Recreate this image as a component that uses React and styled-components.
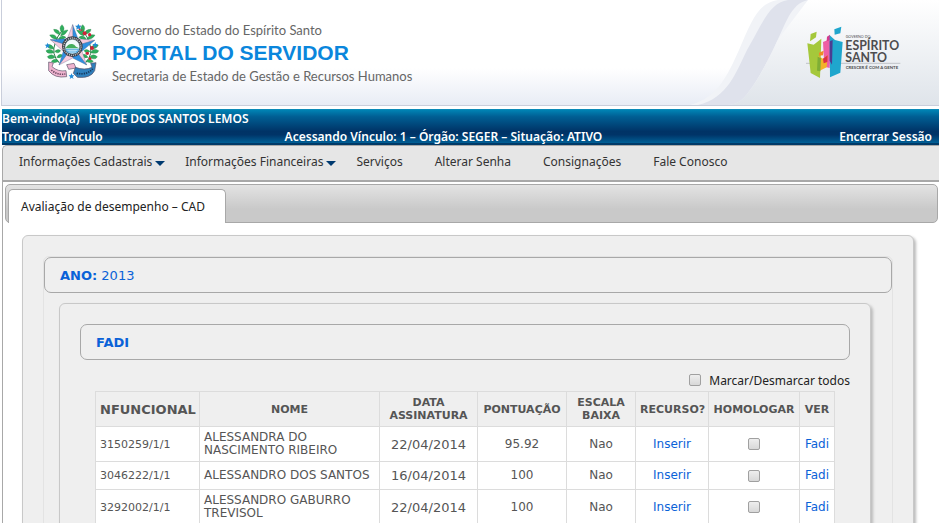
import { useState } from "react";
import styled, { createGlobalStyle } from "styled-components"

const rows = [
  { id: "3150259/1/1", nome: "ALESSANDRA DO NASCIMENTO RIBEIRO", data: "22/04/2014", pontos: "95.92", escala: "Nao" },
  { id: "3046222/1/1", nome: "ALESSANDRO DOS SANTOS", data: "16/04/2014", pontos: "100", escala: "Nao" },
  { id: "3292002/1/1", nome: "ALESSANDRO GABURRO TREVISOL", data: "22/04/2014", pontos: "100", escala: "Nao" },
]

const menu = [
  { label: "Informações Cadastrais", sub: true },
  { label: "Informações Financeiras", sub: true },
  { label: "Serviços" },
  { label: "Alterar Senha" },
  { label: "Consignações" },
  { label: "Fale Conosco" },
]

const Leaves = () => (
  <g>
    <path d="M70 135 Q44 108 58 74 Q62 58 78 38" fill="none" stroke="#2c7a45" strokeWidth="3" />
    <g fill="#2fae5c" stroke="#1d7a40" strokeWidth="1">
      <path d="M78 44 Q66 30 78 20 Q90 32 78 44" />
      <path d="M72 50 Q54 46 53 34 Q72 34 72 50" />
      <path d="M74 54 Q88 52 96 36 Q76 36 74 54" />
      <path d="M64 64 Q48 64 41 51 Q60 46 64 64" />
      <path d="M66 64 Q76 70 90 58 Q76 48 66 64" />
      <path d="M54 93 Q36 94 31 81 Q48 76 54 93" />
      <path d="M54 104 Q34 110 30 98 Q46 88 54 104" />
      <path d="M56 100 Q66 90 74 98 Q66 110 56 100" />
      <path d="M58 118 Q40 128 34 116 Q48 104 58 118" />
      <path d="M62 118 Q70 104 80 112 Q74 124 62 118" />
      <path d="M68 130 Q52 138 46 130 Q58 118 68 130" />
    </g>
  </g>
)

const Brasao = () => (
  <svg width="70" height="70" viewBox="0 0 210 210" aria-hidden="true">
    <Leaves />
    <g transform="translate(218 0) scale(-1 1)">
      <Leaves />
    </g>
    <g fill="#cf2238">
      <path d="M134 22 a8 8 0 1 0 8 12 a6 6 0 0 1 -8 -12" />
      <circle cx="146" cy="46" r="6" />
      <circle cx="161" cy="50" r="5" />
      <circle cx="168" cy="90" r="6" />
      <circle cx="154" cy="106" r="5" />
      <circle cx="162" cy="122" r="4" />
    </g>
    <g strokeWidth="1" stroke="#4c5a80">
      <path d="M110 20 L126 62 L110 86 Z" fill="#2f8fe0" />
      <path d="M110 20 L94 62 L110 86 Z" fill="#f7cbdd" />
      <path d="M176 67 L126 62 L110 86 Z" fill="#f7cbdd" />
      <path d="M176 67 L138 100 L110 86 Z" fill="#2f8fe0" />
      <path d="M152 141 L138 100 L110 86 Z" fill="#f7cbdd" />
      <path d="M152 141 L110 120 L110 86 Z" fill="#2f8fe0" />
      <path d="M69 141 L110 120 L110 86 Z" fill="#f7cbdd" />
      <path d="M69 141 L82 100 L110 86 Z" fill="#2f8fe0" />
      <path d="M43 65 L82 100 L110 86 Z" fill="#f7cbdd" />
      <path d="M43 65 L94 62 L110 86 Z" fill="#2f8fe0" />
    </g>
    <circle cx="109" cy="86" r="31" fill="#3c3d45" />
    <circle cx="109" cy="86" r="26" fill="none" stroke="#d5d7db" strokeWidth="4" strokeDasharray="3 3" />
    <circle cx="109" cy="86" r="22" fill="#f2fafc" stroke="#24555a" strokeWidth="1" />
    <path d="M88 91 Q96 78 106 78 Q114 76 120 86 L130 91 Z" fill="#45ad5e" />
    <path d="M88 92 H130 Q128 102 120 106 H98 Q90 102 88 92" fill="#5eb2e4" />
    <path d="M94 97 H124 M98 102 H120" stroke="#fff" strokeWidth="2" />
    <g stroke="#575067" strokeWidth="2">
      <path d="M38 132 L52 135 L48 146 Q66 162 90 158 L92 176 Q56 182 38 158 Z" fill="#efb4cf" />
      <path d="M92 140 L114 136 L120 150 L98 154 Z" fill="#efb4cf" />
      <path d="M180 134 L164 136 L168 148 Q146 158 118 148 L112 166 L124 178 Q164 182 176 158 Z" fill="#2f80bd" />
    </g>
    <path d="M46 156 Q64 172 88 168" fill="none" stroke="#6c4763" strokeWidth="5" strokeDasharray="4 3" />
    <path d="M122 166 Q154 172 170 152" fill="none" stroke="#16395e" strokeWidth="5" strokeDasharray="4 3" />
    <g fill="#1f8ad8">
      <path d="M127 17 l3 6 7 0 -5 5 2 7 -7 -4 -6 4 1 -7 -5 -5 7 0z" />
      <path d="M35 74 l2 6 6 0 -5 5 3 6 -6 -4 -6 4 2 -6 -5 -5 6 0z" />
      <path d="M178 72 l2 6 6 0 -5 5 3 6 -6 -4 -6 4 2 -6 -5 -5 6 0z" />
      <path d="M107 166 l2 6 6 0 -5 5 3 6 -6 -4 -6 4 2 -6 -5 -5 6 0z" />
    </g>
  </svg>
)

const LogoES = () => (
  <svg width="115" height="70" viewBox="0 0 345 210" role="img" aria-label="Governo do Espírito Santo">
    <path d="M33 136 H316" stroke="#a9adb3" strokeWidth="2" />
    <path d="M84 72 L108 62 L104 150 L88 146 Z" fill="#ee5fa4" />
    <path d="M96 56 L105 50 L106 66 L95 70 Z" fill="#d9398c" />
    <path d="M37 76 L56 80 L79 62 L75 180 L47 165 Z" fill="#a5c83b" />
    <path d="M47 48 L65 41 L63 58 L45 70 Z" fill="#a5c83b" />
    <path d="M104 52 L120 66 L143 72 L136 164 L105 178 Z" fill="#1fa6cd" />
    <path d="M118 34 L139 26 L136 46 L119 50 Z" fill="#1fa6cd" />
    <path d="M104 70 L113 66 L111 140 L104 128 Z" fill="#4b3d92" />
    <path d="M70 114 L84 122 L98 112 L95 148 L74 158 Z" fill="#f3b229" />
    <path d="M72 104 L86 98 L84 112 L72 113 Z" fill="#f08a24" />
    <path d="M84 122 L98 112 L97 132 L86 136 Z" fill="#dd2f45" />
    <path d="M68 116 L78 120 L76 160 L66 158 Z" fill="#7fae35" />
    <g fill="#4d4d4f" fontFamily="Lato, sans-serif">
      <text x="152" y="61" fontSize="11">GOVERNO DO</text>
      <text x="151" y="97" fontSize="37" fontWeight="700">ESPÍRITO</text>
      <text x="151" y="131" fontSize="37" fontWeight="700">SANTO</text>
      <text x="152" y="154" fontSize="13" fontWeight="700">CRESCER É COM A GENTE</text>
    </g>
  </svg>
)

const Onda = () => (
  <Wave viewBox="0 0 299 105" aria-hidden="true">
    <defs>
      <linearGradient id="fundo" x1="0" y1="0" x2="0" y2="1">
        <stop offset="0" stopColor="#ffffff" />
        <stop offset="1" stopColor="#dfe4ea" />
      </linearGradient>
    </defs>
    <path d="M299 0 H168 C150 4 146 24 133 50 C122 72 116 82 110 90 C103 100 98 104 88 105 H299 Z" fill="url(#fundo)" />
    <path d="M138 0 C118 3 112 20 99 50 C88 74 78 98 50 105 H88 L168 0 Z" fill="#f1f3f7" />
    <path d="M148 0 C130 3 124 20 107 50 C96 72 88 98 58 105 H88 C98 104 103 100 110 90 C116 82 122 72 133 50 C146 24 150 4 168 0 Z" fill="#dfe2ec" />
  </Wave>
)

const App = () => {
  const [marked, setMarked] = useState([])

  const toggle = (id) => {
    setMarked(marked.includes(id) ? marked.filter(m => m !== id) : [...marked, id])
  }

  const toggleAll = () => {
    setMarked(marked.length === rows.length ? [] : rows.map(r => r.id))
  }

  return (
    <Page>
      <GlobalStyle />
      <Header>
        <Onda />
        <Brasao />
        <Titles>
          <Subtitle>Governo do Estado do Espírito Santo</Subtitle>
          <Title>PORTAL DO SERVIDOR</Title>
          <Subtitle>Secretaria de Estado de Gestão e Recursos Humanos</Subtitle>
        </Titles>
        <LogoES />
      </Header>
      <UserBar>
        <Welcome>
          <span>Bem-vindo(a)</span>
          <span>HEYDE DOS SANTOS LEMOS</span>
        </Welcome>
        <Session>
          <BarLink href="#vinculo">Trocar de Vínculo</BarLink>
          <span>Acessando Vínculo: 1 – Órgão: SEGER – Situação: ATIVO</span>
          <BarLink href="#sair" $end>Encerrar Sessão</BarLink>
        </Session>
      </UserBar>
      <Menu>
        {menu.map(item => (
          <MenuLink key={item.label} href="#menu" $sub={item.sub}>
            {item.label}
            {item.sub ? <Arrow viewBox="0 0 10 5"><path d="M0 0 H10 L5 5 Z" fill="#003a70" /></Arrow> : null}
          </MenuLink>
        ))}
      </Menu>
      <Content>
        <Tabs role="tablist">
          <Tab role="tab" aria-selected="true">Avaliação de desempenho – CAD</Tab>
        </Tabs>
        <Panel>
          <Group>
            <Legend><b>ANO:</b> 2013</Legend>
            <InnerPanel>
              <Legend><b>FADI</b></Legend>
              <MarkAll>
                <Check id="todos" type="checkbox" checked={marked.length === rows.length} onChange={toggleAll} />
                <label htmlFor="todos">Marcar/Desmarcar todos</label>
              </MarkAll>
              <TableWrap>
                <Table>
                  <colgroup>
                    <Col $w={104} /><Col $w={180} /><Col $w={98} /><Col $w={89} />
                    <Col $w={69} /><Col $w={73} /><Col $w={91} /><Col $w={35} />
                  </colgroup>
                  <thead>
                    <tr>
                      <Th $big>NFUNCIONAL</Th>
                      <Th>NOME</Th>
                      <Th>DATA ASSINATURA</Th>
                      <Th>PONTUAÇÃO</Th>
                      <Th>ESCALA BAIXA</Th>
                      <Th>RECURSO?</Th>
                      <Th>HOMOLOGAR</Th>
                      <Th>VER</Th>
                    </tr>
                  </thead>
                  <tbody>
                    {rows.map(row => (
                      <tr key={row.id}>
                        <Td $left $size={11}>{row.id}</Td>
                        <Td $left>{row.nome}</Td>
                        <Td $size={13}>{row.data}</Td>
                        <Td>{row.pontos}</Td>
                        <Td>{row.escala}</Td>
                        <Td><CellLink href="#inserir">Inserir</CellLink></Td>
                        <Td>
                          <Check
                            type="checkbox"
                            aria-label={"Homologar " + row.nome}
                            checked={marked.includes(row.id)}
                            onChange={() => toggle(row.id)}
                          />
                        </Td>
                        <Td><CellLink href="#fadi">Fadi</CellLink></Td>
                      </tr>
                    ))}
                  </tbody>
                </Table>
              </TableWrap>
            </InnerPanel>
          </Group>
        </Panel>
      </Content>
    </Page>
  )
};

export default App;

const GlobalStyle = createGlobalStyle`
  * {
    box-sizing: border-box;
  }
  body {
    margin: 0;
    background: #fff;
    font-family: "Noto Sans", "Open Sans", sans-serif;
    font-size: 12px;
    color: #222;
  }
`

const Page = styled.div`
  height: 100vh;
  overflow: hidden;
  padding-left: 2px;
`

const Header = styled.header`
  position: relative;
  display: flex;
  align-items: flex-start;
  height: 106px;
  margin-left: -1px;
  padding: 18px 29px 0 34px;
  border-left: 1px solid #c9cedb;
  border-bottom: 1px solid #c9cedb;
  background: linear-gradient(#fff 65%, #e8ecf5);

  > * {
    position: relative;
    flex: none;
  }
`

const Wave = styled.svg`
  && {
    position: absolute;
  }
  top: 0;
  right: 0;
  width: 299px;
  height: 105px;
`

const Titles = styled.div`
  margin: 2px auto 0 6px;
`

const Subtitle = styled.p`
  margin: 0;
  font-family: Lato, "Open Sans", sans-serif;
  font-size: 13px;
  line-height: 20px;
  color: #666;
`

const Title = styled.h1`
  margin: 0;
  font-family: "Liberation Sans", Arial, sans-serif;
  font-size: 21px;
  line-height: 26px;
  color: #0a86dc;
`

const UserBar = styled.div`
  margin-top: 3px;
  height: 36px;
  color: #fff;
  font-weight: 600;
  line-height: 18px;
  border-top: 1px solid #0a8ab8;
  border-bottom: 2px solid #003a68;
  background: linear-gradient(#0083b4, #005f94 20%, #003366 65%, #003468 75%, #006096);
`

const Welcome = styled.div`
  display: flex;
  gap: 9px;
`

const Session = styled.div`
  display: grid;
  grid-template-columns: 6fr auto 7fr;
  padding-right: 7px;
`

const BarLink = styled.a`
  color: #fff;
  text-decoration: none;
  text-align: ${p => p.$end ? "right" : "left"};
`

const Menu = styled.nav`
  display: flex;
  height: 37px;
  padding: 7px 0 0 16px;
  border: 1px solid #a8a8a8;
  border-width: 1px 0 2px 1px;
  border-top-left-radius: 5px;
  background: #e6e6e6;
`

const MenuLink = styled.a`
  display: flex;
  align-items: center;
  height: 16px;
  gap: 3px;
  margin-right: ${p => p.$sub ? 20 : 32}px;
  color: #333;
  text-decoration: none;
`

const Arrow = styled.svg`
  width: 10px;
  height: 5px;
  margin-top: 4px;
`

const Content = styled.main`
  padding: 2px 1px 0 2px;
  border-left: 1px solid #a8a8a8;
`

const Tabs = styled.div`
  display: flex;
  align-items: flex-end;
  height: 39px;
  padding: 0 2px;
  border: 1px solid #a8a8a8;
  border-radius: 5px;
  background: linear-gradient(#e3e3e3, #c9c9c9 65%);
`

const Tab = styled.button`
  height: 34px;
  margin-bottom: -1px;
  padding: 0 20px 0 12px;
  border: 1px solid #a8a8a8;
  border-bottom: 0;
  border-radius: 5px 5px 0 0;
  background: #fff;
  font: inherit;
  color: #222;
`

const Panel = styled.section`
  margin: 12px 24px 0 17px;
  padding: 20px;
  border: 1px solid #c8c8c8;
  border-radius: 6px;
  background: #efefef;
  box-shadow: 2px 2px 3px #bbb;
`

const Group = styled.div`
  padding-bottom: 10px;
  border: 1px solid #e3e3e3;
  border-radius: 6px;
`

const Legend = styled.h2`
  height: 36px;
  margin: 0;
  padding: 0 15px;
  border: 1px solid #a8a8a8;
  border-radius: 7px;
  font-family: "DejaVu Sans", Verdana, sans-serif;
  font-size: 13px;
  font-weight: 400;
  line-height: 35px;
  color: #0a62d8;
`

const InnerPanel = styled.div`
  margin: 10px 21px 0 15px;
  padding: 20px;
  border: 1px solid #c8c8c8;
  border-radius: 6px;
  box-shadow: 2px 2px 3px #bbb;
`

const MarkAll = styled.div`
  display: flex;
  align-items: center;
  justify-content: flex-end;
  gap: 8px;
  height: 18px;
  margin: 11px 0 2px;
`

const Check = styled.input`
  appearance: none;
  width: 12px;
  height: 12px;
  margin: 0;
  border: 1px solid #a0a0a0;
  border-radius: 2px;
  background: linear-gradient(#eee, #d8d8d8);
  vertical-align: middle;

  &:checked {
    background: #5a8fd0;
  }
`

const TableWrap = styled.div`
  padding: 0 15px;
`

const Table = styled.table`
  width: 100%;
  table-layout: fixed;
  border-collapse: collapse;
  font-family: "DejaVu Sans", Verdana, sans-serif;
  color: #555;
`

const Col = styled.col`
  width: ${p => p.$w}px;
`

const Th = styled.th`
  height: 35px;
  padding: 0 4px;
  border: 1px solid #dcdcdc;
  font-size: ${p => p.$big ? 13 : 11}px;
  line-height: 13px;
`

const Td = styled.td`
  height: 28px;
  padding: 4px;
  border: 1px solid #dcdcdc;
  background: #fff;
  font-size: ${p => p.$size || 12}px;
  line-height: 13px;
  text-align: ${p => p.$left ? "left" : "center"};
`

const CellLink = styled.a`
  color: #0a62d8;
  text-decoration: none;
`
